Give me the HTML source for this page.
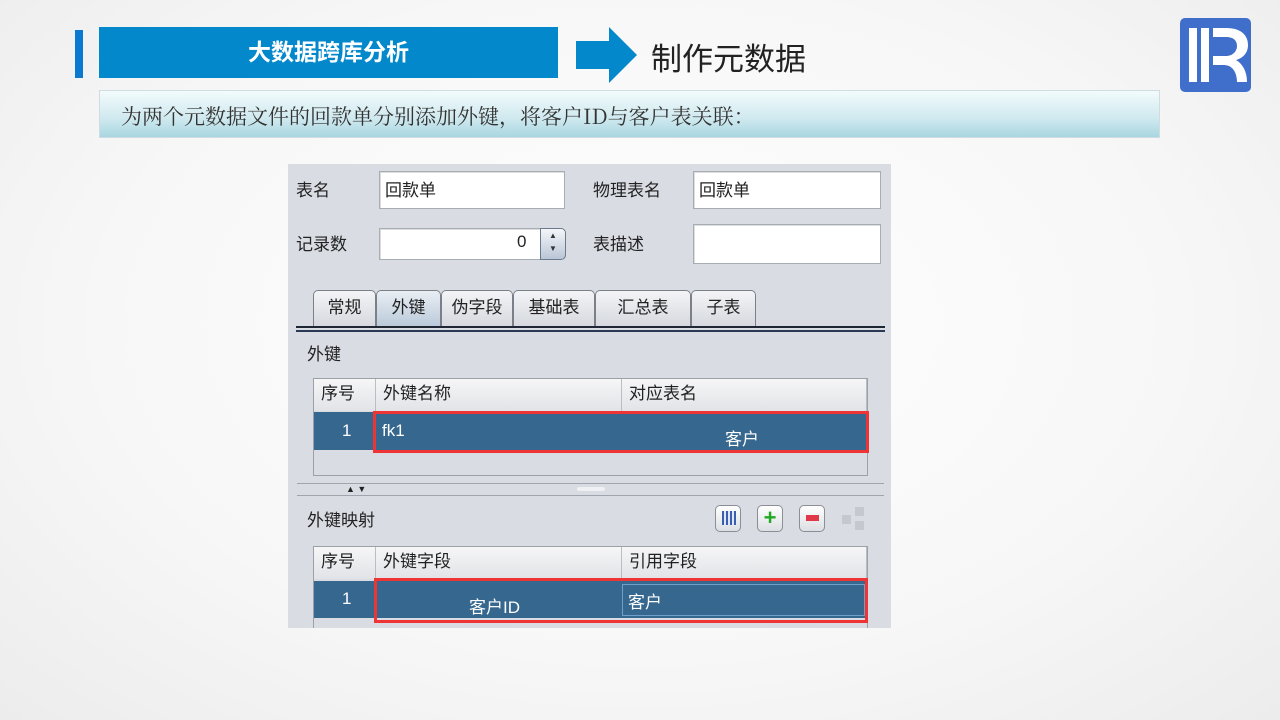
<!DOCTYPE html><html><head><meta charset="utf-8"><style>
*{margin:0;padding:0;box-sizing:border-box}
body{width:1280px;height:720px;overflow:hidden;background:radial-gradient(ellipse at 50% 45%,#ffffff 0%,#f7f7f7 60%,#ececec 100%);font-family:"Liberation Sans","Noto Sans CJK SC",sans-serif;position:relative}
.a{position:absolute}
.lbl{font-size:17px;color:#222}
.inp{background:#fff;border:1px solid #a8adb5;box-shadow:inset 1px 1px 0 #ddd}
.tab{position:absolute;top:290px;height:37px;border:1px solid #7b8088;border-bottom:none;border-radius:5px 5px 0 0;background:linear-gradient(#f3f4f6,#d5d8de);font-size:17px;text-align:center;line-height:34px;color:#222}
.th{position:absolute;font-size:17px;color:#222;line-height:30px;padding-left:7px;border-right:1px solid #b9bdc4;background:linear-gradient(#f6f6f7,#e1e3e7);height:32px}
.ic{position:absolute;top:505px;width:26px;height:27px;border:1px solid #8a8f96;border-radius:5px;background:linear-gradient(#fff,#dcdfe3)}
</style></head><body>
<div class="a" style="left:75px;top:30px;width:8px;height:48px;background:#0a79cf"></div>
<div class="a" style="left:99px;top:27px;width:459px;height:51px;background:#0388cc;color:#fff;font-weight:bold;font-size:23px;text-align:center;line-height:51px">大数据跨库分析</div>
<svg class="a" style="left:576px;top:27px" width="62" height="56"><polygon points="0,14 33,14 33,0 61,28 33,56 33,42 0,42" fill="#0388cc"/></svg>
<div class="a" style="left:651px;top:34px;font-size:31px;color:#222">制作元数据</div>
<svg class="a" style="left:1180px;top:18px" width="72" height="75"><rect x="0" y="0" width="71" height="74" rx="5" fill="#3f6fcb"/><rect x="9" y="10" width="8" height="54" fill="#fff"/><rect x="21" y="10" width="8" height="54" fill="#fff"/><path d="M33 10 H46 C62 10 68 18 68 27 C68 35 63 40 56 42 C63 46 67 54 67 64 H57 C57 54 52 47 44 47 H33 V38 H46 C53 38 57 33 57 28 C57 22 53 19 46 19 H33 Z" fill="#fff"/></svg>
<div class="a" style="left:99px;top:90px;width:1061px;height:48px;background:linear-gradient(#f3fbfc,#cfe9ef 60%,#a9d6e1);border:1px solid #d0dde0"></div>
<div class="a" style="left:121px;top:101px;font-size:21px;color:#333;font-family:'Noto Serif CJK SC','Liberation Serif',serif">为两个元数据文件的回款单分别添加外键，将客户ID与客户表关联：</div>

<div class="a" style="left:288px;top:164px;width:603px;height:464px;background:#d9dce3;overflow:hidden"></div>
<div class="a lbl" style="left:296px;top:176px">表名</div>
<div class="a inp" style="left:379px;top:171px;width:186px;height:38px"></div>
<div class="a lbl" style="left:385px;top:176px">回款单</div>
<div class="a lbl" style="left:593px;top:176px">物理表名</div>
<div class="a inp" style="left:693px;top:171px;width:188px;height:38px"></div>
<div class="a lbl" style="left:699px;top:176px">回款单</div>
<div class="a lbl" style="left:296px;top:230px">记录数</div>
<div class="a inp" style="left:379px;top:228px;width:162px;height:32px"></div>
<div class="a lbl" style="left:517px;top:232px">0</div>
<div class="a" style="left:540px;top:228px;width:26px;height:32px;border:1px solid #6b7a8c;border-radius:0 5px 5px 0;background:linear-gradient(#f4f6f9,#b9c6d6);font-size:8px;color:#333;text-align:center;line-height:13px">▲<br>▼</div>
<div class="a lbl" style="left:593px;top:230px">表描述</div>
<div class="a inp" style="left:693px;top:224px;width:188px;height:40px"></div>

<div class="tab" style="left:313px;width:63px">常规</div>
<div class="tab" style="left:376px;width:65px;background:linear-gradient(#e9eef4,#b8c8d8);height:38px">外键</div>
<div class="tab" style="left:441px;width:72px">伪字段</div>
<div class="tab" style="left:513px;width:82px">基础表</div>
<div class="tab" style="left:595px;width:96px">汇总表</div>
<div class="tab" style="left:691px;width:65px">子表</div>
<div class="a" style="left:296px;top:326px;width:589px;height:2px;background:#1e2733"></div>
<div class="a" style="left:296px;top:330px;width:589px;height:2px;background:#2a3a55"></div>
<div class="a lbl" style="left:307px;top:340px">外键</div>

<div class="a" style="left:313px;top:378px;width:555px;height:98px;border:1px solid #9ca1a8;background:#d9dce3"></div>
<div class="th" style="left:314px;top:379px;width:62px">序号</div>
<div class="th" style="left:376px;top:379px;width:246px">外键名称</div>
<div class="th" style="left:622px;top:379px;width:245px">对应表名</div>
<div class="a" style="left:314px;top:412px;width:553px;height:38px;background:#36678e"></div>
<div class="a" style="left:342px;top:421px;color:#fff;font-size:17px">1</div>
<div class="a" style="left:382px;top:421px;color:#fff;font-size:17px">fk1</div>
<div class="a" style="left:725px;top:425px;color:#fff;font-size:17px">客户</div>
<div class="a" style="left:373px;top:411px;width:496px;height:42px;border:3px solid #ee3434"></div>

<div class="a" style="left:297px;top:483px;width:587px;height:1px;background:#a0a5ad"></div>
<div class="a" style="left:297px;top:495px;width:587px;height:1px;background:#a0a5ad"></div>
<div class="a" style="left:346px;top:484px;font-size:9px;color:#222">▲ ▼</div>
<div class="a" style="left:577px;top:487px;width:28px;height:4px;background:#eef0f3;border-radius:2px"></div>
<div class="a lbl" style="left:307px;top:506px">外键映射</div>
<div class="ic" style="left:715px"><div style="margin:5px 0 0 6px;width:14px;height:14px;background:repeating-linear-gradient(90deg,#3a5fae 0 2px,#dfe6f5 2px 4px)"></div></div>
<div class="ic" style="left:757px;color:#22a822;font-weight:bold;font-size:22px;line-height:24px;text-align:center">+</div>
<div class="ic" style="left:799px"><div style="margin:9px 0 0 6px;width:13px;height:6px;background:#e0394a"></div></div>
<div class="a" style="left:842px;top:507px;width:24px;height:24px;opacity:.6"><div class="a" style="left:0;top:8px;width:9px;height:9px;background:#b8bcc2"></div><div class="a" style="left:13px;top:0;width:9px;height:9px;background:#b8bcc2"></div><div class="a" style="left:13px;top:14px;width:9px;height:9px;background:#b8bcc2"></div></div>

<div class="a" style="left:313px;top:546px;width:555px;height:82px;border:1px solid #9ca1a8;border-bottom:none;background:#d9dce3"></div>
<div class="th" style="left:314px;top:547px;width:62px">序号</div>
<div class="th" style="left:376px;top:547px;width:246px">外键字段</div>
<div class="th" style="left:622px;top:547px;width:245px">引用字段</div>
<div class="a" style="left:314px;top:581px;width:553px;height:37px;background:#36678e"></div>
<div class="a" style="left:622px;top:584px;width:243px;height:32px;border:1px solid #6fa0cc"></div>
<div class="a" style="left:342px;top:589px;color:#fff;font-size:17px">1</div>
<div class="a" style="left:469px;top:593px;color:#fff;font-size:17px">客户ID</div>
<div class="a" style="left:628px;top:588px;color:#fff;font-size:17px">客户</div>
<div class="a" style="left:374px;top:578px;width:494px;height:45px;border:3px solid #ee3434"></div>
</body></html>
